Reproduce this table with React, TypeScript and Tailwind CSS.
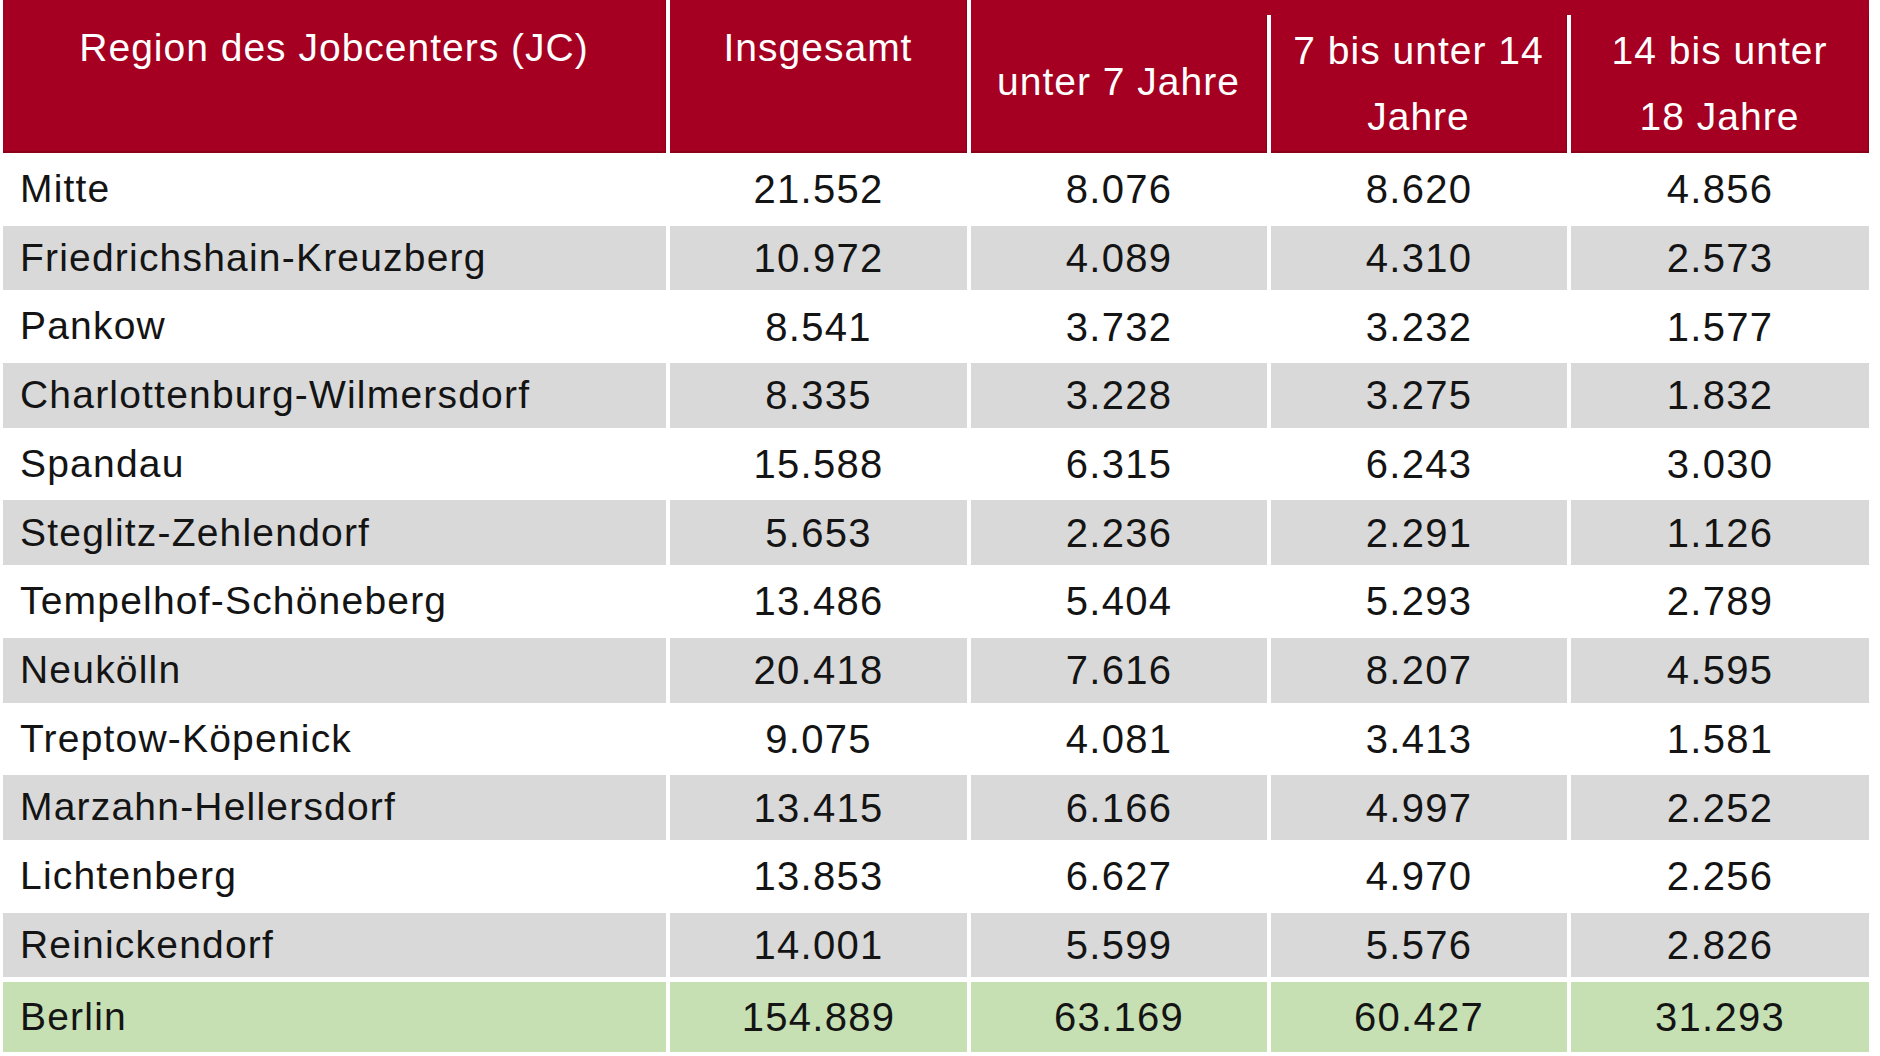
import React from "react";

const rows: [string, string, string, string, string][] = [
  ["Mitte", "21.552", "8.076", "8.620", "4.856"],
  ["Friedrichshain-Kreuzberg", "10.972", "4.089", "4.310", "2.573"],
  ["Pankow", "8.541", "3.732", "3.232", "1.577"],
  ["Charlottenburg-Wilmersdorf", "8.335", "3.228", "3.275", "1.832"],
  ["Spandau", "15.588", "6.315", "6.243", "3.030"],
  ["Steglitz-Zehlendorf", "5.653", "2.236", "2.291", "1.126"],
  ["Tempelhof-Schöneberg", "13.486", "5.404", "5.293", "2.789"],
  ["Neukölln", "20.418", "7.616", "8.207", "4.595"],
  ["Treptow-Köpenick", "9.075", "4.081", "3.413", "1.581"],
  ["Marzahn-Hellersdorf", "13.415", "6.166", "4.997", "2.252"],
  ["Lichtenberg", "13.853", "6.627", "4.970", "2.256"],
  ["Reinickendorf", "14.001", "5.599", "5.576", "2.826"],
];

const font = { fontFamily: "'Liberation Sans', Arial, sans-serif" };

export default function App() {
  return (
    <div className="w-[1880px] h-[1056px] bg-white pl-[3px] overflow-hidden" style={font}>
      <div className="grid grid-cols-[663px_297px_296px_296px_298px] gap-x-[4px]">
        {/* Header */}
        <div className="h-[153px] bg-[#a50021] border-b-2 border-r border-[#8a0018] text-white text-[39px] tracking-[1px] leading-[66px] text-center pt-[15px]">
          Region des Jobcenters (JC)
        </div>
        <div className="h-[153px] bg-[#a50021] border-b-2 border-r border-[#8a0018] text-white text-[39px] tracking-[1px] leading-[66px] text-center pt-[15px]">
          Insgesamt
        </div>
        <div className="col-span-3 h-[153px] flex flex-col">
          <div className="h-[15px] bg-[#a50021]" />
          <div className="flex-1 grid grid-cols-[296px_296px_298px] gap-x-[4px]">
            <div className="bg-[#a50021] border-b-2 border-r border-[#8a0018] text-white text-[39px] tracking-[1px] flex items-center justify-center pb-[1px]">
              unter 7 Jahre
            </div>
            <div className="bg-[#a50021] border-b-2 border-r border-[#8a0018] text-white text-[39px] tracking-[1px] leading-[66px] text-center pt-[3px]">
              7 bis unter 14
              <br />
              Jahre
            </div>
            <div className="bg-[#a50021] border-b-2 border-r border-[#8a0018] text-white text-[39px] tracking-[1px] leading-[66px] text-center pt-[3px]">
              14 bis unter
              <br />
              18 Jahre
            </div>
          </div>
        </div>
      </div>

      <div className="mt-[4px] flex flex-col gap-y-[4px]">
        {rows.map((r, i) => {
          const bg = i % 2 === 1 ? "bg-[#d9d9d9]" : "bg-white";
          return (
            <div key={r[0]} className="grid grid-cols-[663px_297px_296px_296px_298px] gap-x-[4px] h-[64.7px]">
              <div className={`${bg} flex items-center pl-[17px] text-[39px] tracking-[1.2px] text-[#141414]`}>{r[0]}</div>
              {r.slice(1).map((v, j) => (
                <div key={j} className={`${bg} flex items-center justify-center text-[40px] tracking-[1.3px] text-[#141414]`}>
                  {v}
                </div>
              ))}
            </div>
          );
        })}
        <div className="grid grid-cols-[663px_297px_296px_296px_298px] gap-x-[4px] h-[70px] mt-[1px]">
          <div className="bg-[#c6e0b4] flex items-center pl-[17px] text-[39px] tracking-[1.2px] text-[#141414]">Berlin</div>
          {["154.889", "63.169", "60.427", "31.293"].map((v, j) => (
            <div key={j} className="bg-[#c6e0b4] flex items-center justify-center text-[40px] tracking-[1.3px] text-[#141414]">
              {v}
            </div>
          ))}
        </div>
      </div>
    </div>
  );
}
